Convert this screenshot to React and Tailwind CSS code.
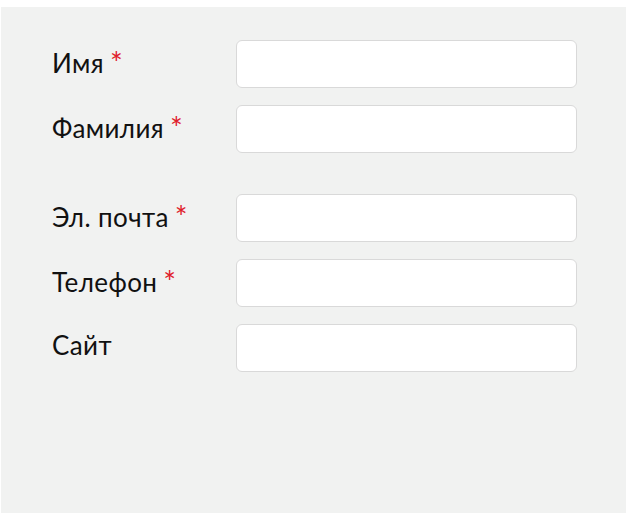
import React from "react";

const fields = [
  { label: "Имя", required: true },
  { label: "Фамилия", required: true },
  { label: "Эл. почта", required: true, gapBefore: true },
  { label: "Телефон", required: true },
  { label: "Сайт", required: false },
];

function Row({ label, required, gapBefore }) {
  return (
    <div className={"flex items-center " + (gapBefore ? "mt-[41px]" : "mt-[17px] first:mt-0")}>
      <label className="relative -top-[3px] w-[184px] shrink-0 text-[26px] leading-none text-[#111] tracking-[0.4px]">
        {label}
        {required && (
          <span className="relative top-[1px] ml-[6px] text-[30px] leading-none text-[#e0202a]">*</span>
        )}
      </label>
      <input
        type="text"
        className="h-[48px] w-[341px] rounded-[6px] border border-[#d9d9d9] bg-white px-3 outline-none"
      />
    </div>
  );
}

export default function App() {
  return (
    <div className="w-[633px] h-[513px] bg-white pt-[7px] pl-[1px]">
      <div
        className="w-[625px] h-[506px] bg-[#f1f2f1] pt-[33px] pl-[51px]"
        style={{ fontFamily: "Lato, 'Noto Sans', sans-serif" }}
      >
        {fields.map((f) => (
          <Row key={f.label} {...f} />
        ))}
      </div>
    </div>
  );
}
